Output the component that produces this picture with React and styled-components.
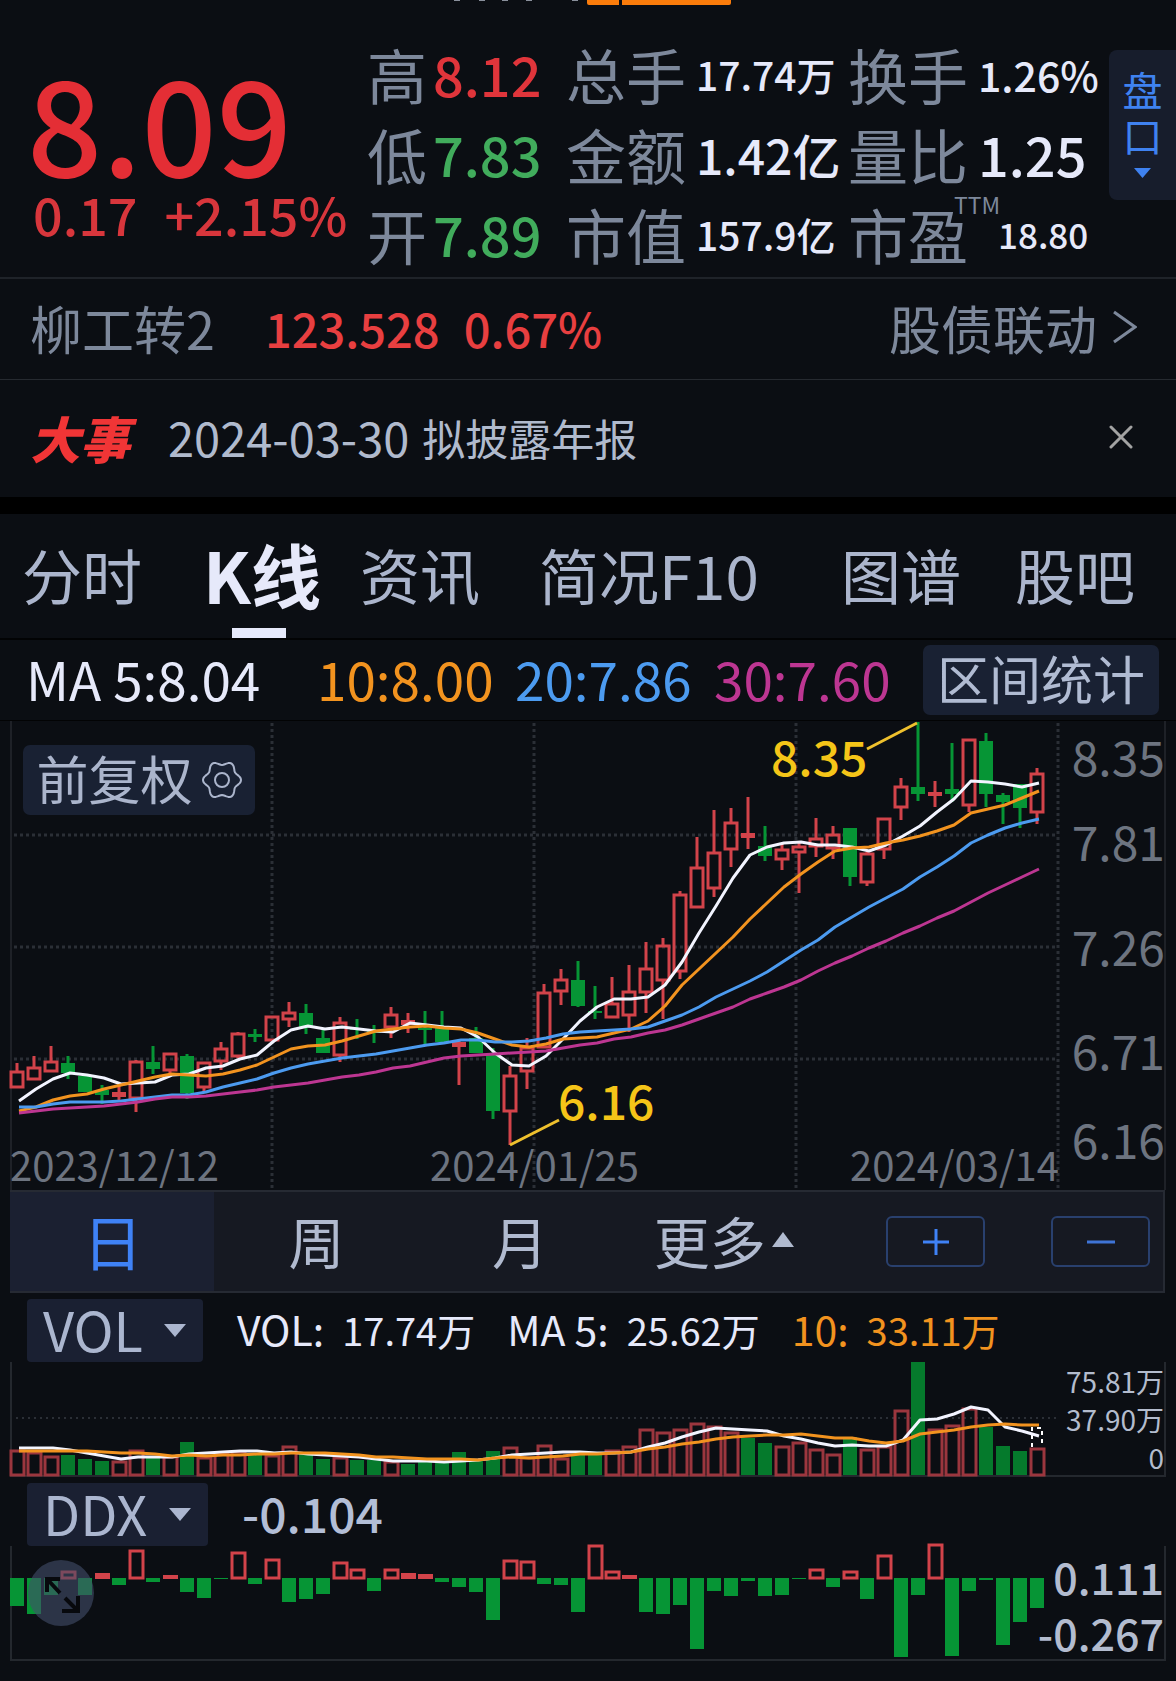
import React from 'react';
import styled, { createGlobalStyle } from 'styled-components';

const RED = '#d2434a';
const GREEN = '#069535';
const WHITE = '#e6e9fa';
const ORANGE = '#f2931f';
const BLUE = '#4c9bf0';
const PURPLE = '#bd3692';

const GlobalStyle = createGlobalStyle`
    body{
        margin:0;
        background:#0b0e13;
    }
    *{
        box-sizing:border-box;
    }
    body, button, select{
        font-family:"Noto Sans CJK SC", sans-serif;
    }
    button, select{
        border:0;
        padding:0;
        margin:0;
        background:none;
        cursor:pointer;
    }
    a{
        text-decoration:none;
    }
    svg{
        display:block;
    }
`

const Page = styled.main`
    position:relative;
    width:100%;
    overflow:hidden;
    padding-bottom:19px;
    background:#0b0e13;
    color:${WHITE};
    white-space:nowrap;
`

const TopEdge = styled.svg`
    position:absolute;
    top:0;
    left:38%;
`

const Quote = styled.section`
    display:grid;
    grid-template-columns:367fr 199fr 282fr 261fr 67fr;
    padding-top:34px;
    height:279px;
    border-bottom:2px solid #1f2329;
`

const PriceBlock = styled.div`
    padding:26px 0 0 27px;
    color:#e42e35;
    font-weight:500;
`

const Price = styled.div`
    font-size:132px;
    line-height:120px;
`

const Change = styled.div`
    display:flex;
    gap:27px;
    padding-left:6px;
    font-size:52px;
    line-height:68px;
    color:#d8363c;
`

const StatColumn = styled.dl`
    margin:0;
`

const Stat = styled.div`
    display:flex;
    align-items:center;
    gap:${props => props.$tight ? '6px' : '10px'};
    height:80px;
`

const StatLabel = styled.dt`
    position:relative;
    font-size:60px;
    line-height:80px;
    color:#7d889b;
`

const StatValue = styled.dd`
    margin:0;
    padding-left:${props => props.$indent ? '20px' : '0'};
    font-size:${props => props.$size}px;
    line-height:80px;
    font-weight:500;
    color:${props => props.$color || WHITE};
`

const Superscript = styled.sup`
    position:absolute;
    top:-4px;
    left:106px;
    font-size:23px;
    line-height:28px;
`

const DepthButton = styled.button`
    display:flex;
    flex-direction:column;
    align-items:center;
    height:150px;
    margin-top:16px;
    padding-top:16px;
    border-radius:8px 0 0 8px;
    background:#171d2c;
    color:#3f82f0;
    font-size:40px;
    line-height:46px;
    svg{
        margin-top:10px;
    }
`

const BondRow = styled.section`
    display:flex;
    align-items:center;
    height:101px;
    padding:0 39px 4px 30px;
    border-bottom:1px solid #262a30;
    font-size:52px;
    color:#7d889b;
`

const BondValues = styled.div`
    display:flex;
    gap:24px;
    margin-left:50px;
    font-size:47px;
    font-weight:500;
    color:#e83f40;
`

const BondLink = styled.a`
    display:flex;
    align-items:center;
    gap:16px;
    margin-left:auto;
    color:#7d889b;
`

const EventRow = styled.section`
    display:flex;
    align-items:center;
    height:134px;
    padding:0 43px 4px 30px;
    border-bottom:17px solid #000;
    font-size:43px;
    color:#b0bacd;
`

const EventTag = styled.strong`
    margin-right:38px;
    font-size:50px;
    font-weight:900;
    font-style:italic;
    color:#f03536;
`

const EventDate = styled.time`
    margin-right:13px;
    font-size:47px;
`

const CloseButton = styled.button`
    margin-left:auto;
`

const Tabs = styled.nav`
    display:grid;
    grid-template-columns:181fr 157fr 179fr 302fr 174fr 161fr;
    height:126px;
    padding-left:22px;
    border-bottom:2px solid #020304;
`

const Tab = styled.a`
    position:relative;
    justify-self:start;
    font-size:${props => props.$active ? '70px' : '60px'};
    line-height:120px;
    font-weight:${props => props.$active ? 700 : 400};
    color:${props => props.$active ? WHITE : '#abb5cc'};
    ${props => props.$active && `
        &::after{
            content:'';
            position:absolute;
            left:50%;
            bottom:0;
            width:54px;
            height:10px;
            margin-left:-30px;
            background:${WHITE};
        }
    `}
`

const MaRow = styled.div`
    display:grid;
    grid-template-columns:291fr 198fr 199fr 209fr 236px;
    align-items:center;
    height:81px;
    padding:0 17px 0 26px;
    border-bottom:1px solid #020304;
`

const MaValue = styled.span`
    padding-bottom:4px;
    font-size:53px;
    line-height:70px;
    color:${props => props.$color};
`

const RangeButton = styled.button`
    height:70px;
    padding-bottom:4px;
    border-radius:7px;
    background:#192133;
    color:#b0bbd2;
    font-size:52px;
    line-height:64px;
`

const ChartBox = styled.div`
    position:relative;
`

const Chart = styled.svg`
    width:100%;
    height:auto;
    overflow:visible;
    font-family:"Noto Sans CJK SC", sans-serif;
`

const AdjustButton = styled.button`
    position:absolute;
    top:24px;
    left:23px;
    display:flex;
    align-items:center;
    justify-content:center;
    gap:9px;
    width:232px;
    height:70px;
    border-radius:7px;
    background:#192133;
    color:#abb5cc;
    font-size:52px;
    line-height:64px;
    span{
        padding-bottom:4px;
    }
`

const PeriodBar = styled.div`
    display:grid;
    grid-template-columns:204fr 204fr 204fr 204fr 339fr;
    height:103px;
    margin:0 11px 0 10px;
    border:2px solid #262a33;
    border-left:0;
    background:#161922;
`

const PeriodButton = styled.button`
    display:flex;
    align-items:center;
    justify-content:center;
    gap:6px;
    padding:0 0 4px 2px;
    background:${props => props.$active ? '#1b2031' : 'none'};
    color:${props => props.$active ? '#3f82f6' : '#b0bacf'};
    font-size:${props => props.$active ? '60px' : '56px'};
`

const ZoomButtons = styled.div`
    display:flex;
    align-items:center;
    justify-content:flex-end;
    gap:66px;
    padding-right:13px;
`

const ZoomButton = styled.button`
    display:flex;
    align-items:center;
    justify-content:center;
    width:99px;
    height:51px;
    border:2px solid #29406e;
    border-radius:6px;
`

const IndicatorRow = styled.div`
    display:flex;
    align-items:center;
    height:69px;
    padding:6px 0 0 27px;
`

const SelectBox = styled.label`
    position:relative;
    width:${props => props.$width}px;
    margin-right:34px;
    svg{
        position:absolute;
        right:17px;
        top:25px;
        pointer-events:none;
    }
`

const IndicatorSelect = styled.select`
    display:block;
    width:100%;
    height:63px;
    padding:0 0 4px 16px;
    appearance:none;
    border-radius:4px;
    background:#1a2032;
    color:#abb6cf;
    font-size:54px;
    line-height:59px;
`

const Legend = styled.div`
    display:flex;
    gap:32px;
    padding-bottom:4px;
    font-size:${props => props.$size}px;
    line-height:57px;
    font-weight:${props => props.$strong ? 500 : 400};
    color:${props => props.$color || WHITE};
`

const LegendItem = styled.div`
    display:flex;
    align-items:baseline;
    gap:18px;
    color:${props => props.$color};
`

const LegendValue = styled.span`
    font-size:38px;
`

const ExpandButton = styled.button`
    position:absolute;
    left:28px;
    top:14px;
    width:66px;
    height:66px;
    border-radius:50%;
    background:rgba(66, 78, 106, 0.6);
`

// colour, high, body top, body bottom, low
const candles = [
    ['R', 1063, 1071, 1088, 1088], ['R', 1056, 1067, 1080, 1080], ['R', 1046, 1061, 1072, 1072],
    ['G', 1056, 1063, 1073, 1079], ['G', 1076, 1076, 1092, 1092], ['G', 1085, 1090, 1095, 1104],
    ['R', 1083, 1092, 1097, 1100], ['R', 1060, 1061, 1099, 1112], ['G', 1046, 1062, 1069, 1074],
    ['R', 1053, 1053, 1071, 1075], ['G', 1054, 1056, 1093, 1099], ['R', 1062, 1062, 1088, 1093],
    ['R', 1042, 1048, 1062, 1070], ['R', 1032, 1033, 1057, 1058], ['G', 1029, 1034, 1037, 1042],
    ['R', 1016, 1016, 1041, 1041], ['R', 1002, 1012, 1020, 1027], ['G', 1004, 1013, 1028, 1034],
    ['G', 1029, 1038, 1053, 1053], ['R', 1017, 1022, 1056, 1062], ['G', 1019, 1028, 1029, 1039],
    ['G', 1025, 1031, 1033, 1043], ['R', 1007, 1014, 1028, 1038], ['R', 1013, 1020, 1025, 1033],
    ['G', 1011, 1028, 1029, 1045], ['G', 1011, 1026, 1042, 1042], ['R', 1040, 1042, 1047, 1085],
    ['G', 1027, 1038, 1053, 1053], ['G', 1048, 1054, 1111, 1119], ['R', 1066, 1075, 1112, 1145],
    ['R', 1038, 1047, 1072, 1089], ['R', 984, 992, 1048, 1048], ['R', 969, 979, 992, 1005],
    ['G', 961, 980, 1006, 1007], ['G', 986, 1011, 1012, 1019], ['R', 977, 1003, 1018, 1018],
    ['R', 965, 991, 1016, 1032], ['R', 942, 968, 993, 1013], ['R', 938, 945, 981, 1019],
    ['R', 891, 894, 972, 979], ['R', 837, 867, 908, 908], ['R', 810, 852, 889, 897],
    ['R', 808, 822, 850, 867], ['R', 797, 833, 838, 849], ['G', 826, 846, 856, 861],
    ['R', 843, 849, 860, 870], ['R', 843, 846, 853, 893], ['R', 818, 838, 847, 857],
    ['R', 826, 834, 849, 859], ['G', 828, 828, 877, 886], ['R', 852, 853, 883, 886],
    ['R', 818, 818, 850, 859], ['R', 778, 786, 808, 820], ['G', 722, 787, 794, 801],
    ['R', 781, 792, 796, 807], ['G', 743, 789, 794, 802], ['R', 739, 739, 806, 812],
    ['G', 733, 741, 794, 807], ['G', 793, 795, 802, 824], ['G', 784, 784, 808, 828],
    ['R', 768, 773, 813, 824],
];

const ma5 = [1101, 1089, 1079, 1073, 1075, 1078, 1084, 1083, 1082, 1075, 1074, 1068, 1066, 1059, 1055, 1041, 1030, 1026, 1029, 1027, 1029, 1031, 1032, 1023, 1025, 1027, 1028, 1037, 1053, 1065, 1066, 1056, 1039, 1021, 1007, 999, 999, 997, 985, 962, 933, 906, 878, 855, 847, 843, 842, 845, 845, 847, 851, 845, 836, 826, 812, 799, 781, 782, 784, 787, 783];
const ma10 = [1111, 1107, 1100, 1096, 1094, 1089, 1085, 1081, 1077, 1074, 1075, 1076, 1074, 1070, 1065, 1057, 1049, 1046, 1045, 1041, 1036, 1031, 1029, 1027, 1026, 1028, 1029, 1033, 1039, 1045, 1047, 1044, 1039, 1038, 1037, 1033, 1029, 1021, 1006, 985, 969, 953, 937, 919, 903, 887, 874, 862, 851, 848, 847, 843, 840, 836, 831, 825, 813, 809, 805, 798, 791];
const ma20 = [1107, 1107, 1104, 1102, 1102, 1102, 1101, 1099, 1097, 1095, 1095, 1092, 1087, 1083, 1079, 1073, 1068, 1064, 1061, 1058, 1056, 1054, 1051, 1048, 1045, 1043, 1040, 1040, 1042, 1042, 1041, 1038, 1034, 1032, 1031, 1030, 1029, 1027, 1021, 1015, 1007, 997, 989, 981, 972, 961, 950, 940, 927, 917, 907, 898, 889, 877, 867, 856, 843, 835, 828, 823, 819];
const ma30 = [1113, 1111, 1109, 1108, 1107, 1106, 1104, 1102, 1099, 1097, 1097, 1096, 1094, 1092, 1090, 1087, 1085, 1083, 1080, 1077, 1075, 1072, 1068, 1066, 1062, 1058, 1056, 1055, 1054, 1053, 1052, 1051, 1048, 1045, 1043, 1039, 1037, 1033, 1030, 1025, 1019, 1013, 1007, 999, 993, 987, 980, 971, 963, 956, 948, 941, 933, 926, 918, 911, 902, 893, 885, 877, 869];

// positive is a rising day, negative a falling one
const volumes = [26, 24, 20, -20, -16, -14, 15, 26, -18, 20, -33, 19, 24, 25, -20, 21, 30, -21, -16, 19, -15, -15, 15, -11, -13, -13, -23, -15, -24, 29, 19, 31, 18, -20, -20, 26, 30, 47, 44, 47, 53, 50, 44, -37, -32, 30, 34, 27, 22, -38, 27, 30, 66, -113, 47, 51, 68, -48, -29, -24, 28];
const volMa5 = [1448, 1448, 1448, 1450, 1453, 1456, 1459, 1457, 1457, 1457, 1454, 1453, 1452, 1451, 1451, 1453, 1452, 1454, 1455, 1456, 1457, 1459, 1461, 1461, 1461, 1462, 1461, 1460, 1458, 1455, 1454, 1453, 1452, 1452, 1453, 1453, 1452, 1447, 1443, 1437, 1432, 1428, 1429, 1430, 1431, 1436, 1439, 1443, 1446, 1445, 1446, 1446, 1440, 1420, 1419, 1414, 1407, 1410, 1427, 1431, 1436];
const volMa10 = [1451, 1451, 1451, 1451, 1451, 1452, 1453, 1453, 1454, 1456, 1455, 1456, 1455, 1455, 1454, 1454, 1453, 1453, 1453, 1454, 1455, 1457, 1457, 1458, 1459, 1459, 1459, 1460, 1458, 1457, 1458, 1457, 1456, 1454, 1454, 1453, 1452, 1449, 1447, 1444, 1442, 1439, 1437, 1436, 1435, 1435, 1434, 1436, 1438, 1438, 1441, 1443, 1441, 1434, 1432, 1430, 1427, 1425, 1424, 1425, 1425];

const ddx = [-28, -36, -17, 8, -17, 6, -7, 29, -4, 4, -14, -20, -1, 27, -6, 20, -24, -21, -16, 17, 10, -13, 10, 6, 5, -4, -9, -14, -42, 19, 18, -6, -7, -34, 34, 8, 4, -34, -36, -27, -71, -13, -18, -3, -18, -17, -1, 10, -9, 8, -21, 24, -79, -17, 35, -78, -13, -2, -67, -44, -30];

const xAt = i => 17 + i * 17;

const Line = ({ data, color }) => (
    <polyline
        points={data.map((y, i) => `${xAt(i) + 2},${y}`).join(' ')}
        fill="none"
        stroke={color}
        strokeWidth="3"
        strokeLinejoin="round"
    />
)

const Candle = ({ index, data }) => {
    const [kind, high, top, bottom, low] = data;
    const x = xAt(index);
    const color = kind === 'R' ? RED : GREEN;
    const hollow = kind === 'R' && bottom - top > 5;

    return (
        <g stroke={color} strokeWidth="3">
            <line x1={x} x2={x} y1={high} y2={top} />
            <line x1={x} x2={x} y1={bottom} y2={low} />
            {hollow
                ? <rect x={x - 6} y={top + 1} width="12" height={bottom - top - 2} fill="none" />
                : <rect x={x - 7} y={top} width="14" height={Math.max(bottom - top, 2)} fill={color} stroke="none" />}
        </g>
    )
}

const Bar = ({ index, value, base, red, green }) => {
    const x = xAt(index);
    if (value < 0) {
        return <rect x={x - 7} y={green === GREEN ? base : base + value} width="14" height={-value} fill={green} />
    }
    if (value < 7) {
        return <rect x={x - 7} y={base + 1 - value} width="15" height={value} fill={red} />
    }
    return <rect x={x - 6} y={base - value + 2} width="13" height={value - 2} fill="none" stroke={red} strokeWidth="3" />
}

const PriceChart = () => (
    <Chart viewBox="0 721 1176 469" role="img" aria-label="K线">
        <g stroke="#2b2f36" strokeWidth="3" strokeDasharray="3 3">
            {[272, 534, 796, 1058].map(x => <line key={x} x1={x} x2={x} y1="723" y2="1190" />)}
            {[835, 947, 1059].map(y => <line key={y} x1="14" x2="1058" y1={y} y2={y} />)}
        </g>
        <path d="M11 721V1190M1165 721V1190" stroke="#1e2127" strokeWidth="2" />
        <g fill="#6d7480" fontSize="40">
            <text x="10" y="1181">2023/12/12</text>
            <text x="430" y="1181">2024/01/25</text>
            <text x="1059" y="1181" textAnchor="end">2024/03/14</text>
        </g>
        <g fill="#6d7480" fontSize="48" textAnchor="end">
            <text x="1165" y="776">8.35</text>
            <text x="1165" y="861">7.81</text>
            <text x="1165" y="966">7.26</text>
            <text x="1165" y="1070">6.71</text>
            <text x="1165" y="1159">6.16</text>
        </g>
        {candles.map((data, i) => <Candle key={i} index={i} data={data} />)}
        <Line data={ma5} color="#f2f4ff" />
        <Line data={ma10} color={ORANGE} />
        <Line data={ma20} color={BLUE} />
        <Line data={ma30} color={PURPLE} />
        <path d="M867 749L917 723M510 1145L559 1120" stroke="#eec02d" strokeWidth="3" />
        <g fill="#f5c518" fontSize="48" fontWeight="500">
            <text x="771" y="776">8.35</text>
            <text x="558" y="1120">6.16</text>
        </g>
    </Chart>
)

const VolumeChart = () => (
    <Chart viewBox="0 1362 1176 115" role="img" aria-label="VOL">
        <line x1="16" x2="1057" y1="1418" y2="1418" stroke="#2b2f36" strokeWidth="2" strokeDasharray="2 4" />
        <path d="M11 1362V1476H1165V1362" fill="none" stroke="#24282e" strokeWidth="2" />
        {volumes.map((value, i) => <Bar key={i} index={i} value={value} base={1475} red="#9b363e" green="#057a2c" />)}
        <path d="M1032 1447V1428H1042V1447" fill="none" stroke="#fff" strokeWidth="2" strokeDasharray="4 4" />
        <Line data={volMa5} color="#f2f4ff" />
        <Line data={volMa10} color={ORANGE} />
        <g fill="#b3bccd" fontSize="28" textAnchor="end">
            <text x="1164" y="1393">75.81万</text>
            <text x="1164" y="1431">37.90万</text>
            <text x="1164" y="1469">0</text>
        </g>
    </Chart>
)

const DdxChart = () => (
    <Chart viewBox="0 1546 1176 116" role="img" aria-label="DDX">
        <path d="M11 1546V1660H1165V1546" fill="none" stroke="#24282e" strokeWidth="2" />
        {ddx.map((value, i) => <Bar key={i} index={i} value={value} base={1578} red={RED} green={GREEN} />)}
        <g fill="#b3bccf" fontSize="43" fontWeight="500" textAnchor="end">
            <text x="1164" y="1595">0.111</text>
            <text x="1164" y="1651">-0.267</text>
        </g>
    </Chart>
)

const Triangle = ({ up, width = 22, height = 13 }) => (
    <svg width={width} height={height} viewBox="0 0 22 13" preserveAspectRatio="none" fill="currentColor" color={up ? undefined : '#abb6cf'}>
        <path d={up ? 'M0 13L11 0L22 13Z' : 'M0 0H22L11 13Z'} />
    </svg>
)

const gearPath = Array.from({ length: 72 }, (_, i) => {
    const angle = (i * Math.PI) / 36;
    const r = 17 + 2 * Math.cos(6 * angle);
    return `${(20 + r * Math.cos(angle)).toFixed(1)} ${(20 + r * Math.sin(angle)).toFixed(1)}`;
}).join('L');

const Gear = () => (
    <svg width="40" height="40" viewBox="0 0 40 40" fill="none" stroke="currentColor" strokeWidth="2">
        <path d={`M${gearPath}Z`} strokeLinejoin="round" />
        <circle cx="20" cy="20" r="7" />
    </svg>
)

const stats = [
    [
        { label: '高', value: '8.12', size: 54, color: '#e0353b' },
        { label: '低', value: '7.83', size: 54, color: '#41ac5c' },
        { label: '开', value: '7.89', size: 54, color: '#41ac5c' },
    ],
    [
        { label: '总手', value: '17.74万', size: 39 },
        { label: '金额', value: '1.42亿', size: 48 },
        { label: '市值', value: '157.9亿', size: 39 },
    ],
    [
        { label: '换手', value: '1.26%', size: 41 },
        { label: '量比', value: '1.25', size: 54 },
        { label: '市盈', sup: 'TTM', value: '18.80', size: 35 },
    ],
];

const legends = [
    { label: 'VOL:', value: '17.74万', color: WHITE },
    { label: 'MA 5:', value: '25.62万', color: WHITE },
    { label: '10:', value: '33.11万', color: ORANGE },
];

const Indicator = ({ name, width }) => (
    <SelectBox $width={width}>
        <IndicatorSelect aria-label={name} defaultValue={name}>
            <option>{name}</option>
        </IndicatorSelect>
        <Triangle />
    </SelectBox>
)

const App = () => (
    <>
        <GlobalStyle />
        <Page>
            <TopEdge width="290" height="6" viewBox="0 0 290 6" aria-hidden="true">
                <path d="M7 0h6M32 0h6M55 0h6M79 0h6M125 0h6" stroke="#8a909c" strokeWidth="2" />
                <path d="M140 0H172V5H142Q140 5 140 3ZM175 0H284V3Q284 5 282 5H175Z" fill="#fb7c0b" />
            </TopEdge>

            <Quote>
                <PriceBlock>
                    <Price>8.09</Price>
                    <Change>
                        <span>0.17</span>
                        <span>+2.15%</span>
                    </Change>
                </PriceBlock>
                {stats.map((column, i) => (
                    <StatColumn key={i}>
                        {column.map(({ label, sup, value, size, color }) => (
                            <Stat key={label} $tight={i === 0}>
                                <StatLabel>
                                    {label}
                                    {sup && <Superscript>{sup}</Superscript>}
                                </StatLabel>
                                <StatValue $size={size} $color={color} $indent={Boolean(sup)}>{value}</StatValue>
                            </Stat>
                        ))}
                    </StatColumn>
                ))}
                <DepthButton>
                    <span>盘</span>
                    <span>口</span>
                    <svg width="17" height="10" viewBox="0 0 17 10" fill="currentColor">
                        <path d="M0 0H17L8.5 10Z" />
                    </svg>
                </DepthButton>
            </Quote>

            <BondRow>
                <span>柳工转2</span>
                <BondValues>
                    <span>123.528</span>
                    <span>0.67%</span>
                </BondValues>
                <BondLink href="#bond">
                    股债联动
                    <svg width="24" height="34" viewBox="0 0 24 34" fill="none" stroke="currentColor" strokeWidth="3">
                        <path d="M1 2L22 17L1 32" />
                    </svg>
                </BondLink>
            </BondRow>

            <EventRow>
                <EventTag>大事</EventTag>
                <EventDate>2024-03-30</EventDate>
                <span>拟披露年报</span>
                <CloseButton aria-label="关闭">
                    <svg width="24" height="24" viewBox="0 0 24 24" stroke="#a3a3a3" strokeWidth="3" strokeLinecap="round">
                        <path d="M2 2L22 22M22 2L2 22" />
                    </svg>
                </CloseButton>
            </EventRow>

            <Tabs>
                <Tab href="#time">分时</Tab>
                <Tab href="#kline" $active>K线</Tab>
                <Tab href="#news">资讯</Tab>
                <Tab href="#f10">简况F10</Tab>
                <Tab href="#map">图谱</Tab>
                <Tab href="#forum">股吧</Tab>
            </Tabs>

            <MaRow>
                <MaValue $color={WHITE}>MA 5:8.04</MaValue>
                <MaValue $color={ORANGE}>10:8.00</MaValue>
                <MaValue $color={BLUE}>20:7.86</MaValue>
                <MaValue $color={PURPLE}>30:7.60</MaValue>
                <RangeButton>区间统计</RangeButton>
            </MaRow>

            <ChartBox>
                <PriceChart />
                <AdjustButton>
                    <span>前复权</span>
                    <Gear />
                </AdjustButton>
            </ChartBox>

            <PeriodBar>
                <PeriodButton $active>日</PeriodButton>
                <PeriodButton>周</PeriodButton>
                <PeriodButton>月</PeriodButton>
                <PeriodButton>更多<Triangle up height={15} /></PeriodButton>
                <ZoomButtons>
                    <ZoomButton aria-label="放大">
                        <svg width="28" height="28" viewBox="0 0 28 28" stroke="#3f82f6" strokeWidth="3">
                            <path d="M1 14H27M14 1V27" />
                        </svg>
                    </ZoomButton>
                    <ZoomButton aria-label="缩小">
                        <svg width="28" height="28" viewBox="0 0 28 28" stroke="#3f74d6" strokeWidth="3">
                            <path d="M0 14H28" />
                        </svg>
                    </ZoomButton>
                </ZoomButtons>
            </PeriodBar>

            <IndicatorRow>
                <Indicator name="VOL" width={176} />
                <Legend $size={41}>
                    {legends.map(({ label, value, color }) => (
                        <LegendItem key={label} $color={color}>
                            <span>{label}</span>
                            <LegendValue>{value}</LegendValue>
                        </LegendItem>
                    ))}
                </Legend>
            </IndicatorRow>
            <VolumeChart />

            <IndicatorRow>
                <Indicator name="DDX" width={181} />
                <Legend $size={48} $color="#b3bed6" $strong>-0.104</Legend>
            </IndicatorRow>
            <ChartBox>
                <DdxChart />
                <ExpandButton aria-label="全屏">
                    <svg width="66" height="66" viewBox="0 0 66 66" fill="none" stroke="#07090d" strokeWidth="4">
                        <path d="M19 32V19H32M19 19L32 33M37 38L50 51M50 36V51H34" />
                    </svg>
                </ExpandButton>
            </ChartBox>
        </Page>
    </>
)

export default App;
